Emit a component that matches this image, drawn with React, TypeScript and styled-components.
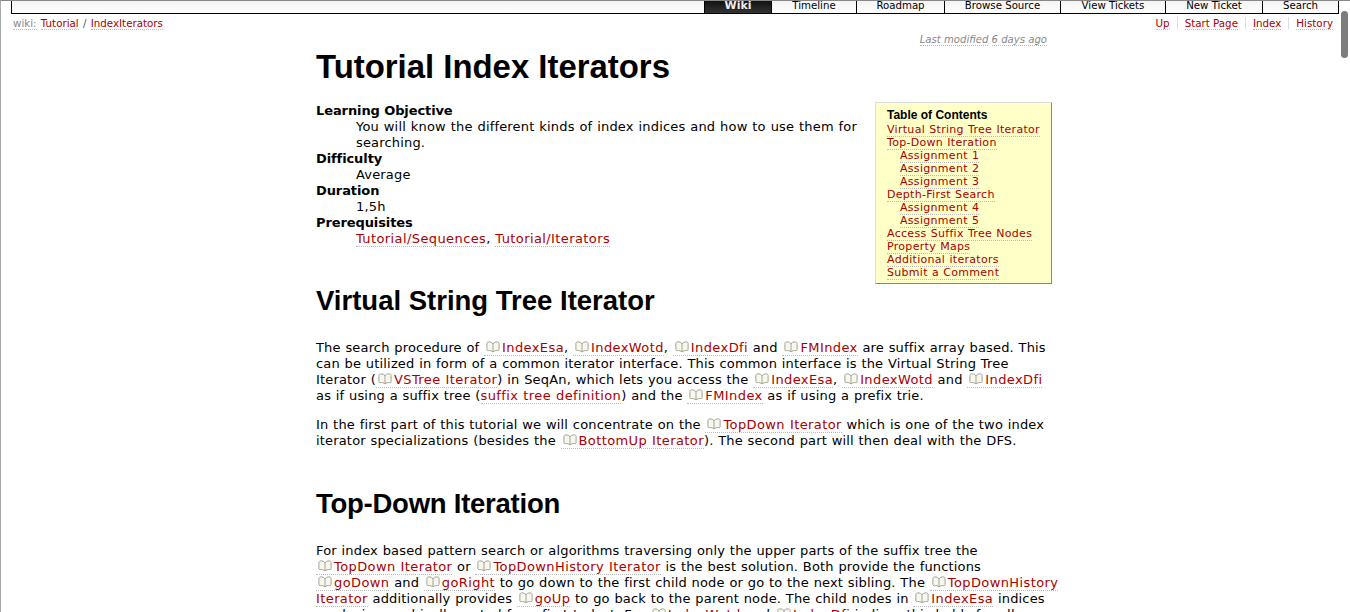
import * as React from "react";
import styled, { createGlobalStyle } from "styled-components";

const GlobalStyle = createGlobalStyle`
    html, body {
        margin: 0;
        height: 612px;
        overflow: hidden;
        background: #fff;
        font-family: "DejaVu Sans", Verdana, sans-serif;
        font-size: 13px;
        color: #000;
    }
`;

const tabs = [
    { label: "Wiki", width: 67, active: true },
    { label: "Timeline", width: 85 },
    { label: "Roadmap", width: 88 },
    { label: "Browse Source", width: 116 },
    { label: "View Tickets", width: 105 },
    { label: "New Ticket", width: 97 },
    { label: "Search", width: 76 },
];

const Book = () => (
    <BookIcon viewBox="0 0 14 12" aria-hidden="true">
        <path d="M7 3C6.4 1.4 4.6.8 2.6.9 1.6 1 1 1.4.9 2.4v6.2c0 .8.5 1.1 1.3 1C4 9.4 6 9.8 7 11c1-1.2 3-1.6 4.8-1.4.8.1 1.3-.2 1.3-1V2.4c-.1-1-.7-1.4-1.7-1.5C9.4.8 7.6 1.4 7 3z" />
        <path d="M7 3v8" />
    </BookIcon>
);

const Ext: React.FC<{ children: React.ReactNode }> = ({ children }) => (
    <Link $icon>
        <Book />
        {children}
    </Link>
);

export default function App() {
    return (
        <Page>
            <GlobalStyle />
            <MainNav>
                {tabs.map((t) => (
                    <Tab key={t.label} $width={t.width} $active={t.active}>
                        {t.label}
                    </Tab>
                ))}
            </MainNav>
            <ContextBar>
                <Path>
                    <Muted>wiki:</Muted> <PathLink>Tutorial</PathLink> / <PathLink>IndexIterators</PathLink>
                </Path>
                <ContextNav>
                    <ContextItem><PathLink>Up</PathLink></ContextItem>
                    <ContextItem><PathLink>Start Page</PathLink></ContextItem>
                    <ContextItem><PathLink>Index</PathLink></ContextItem>
                    <ContextItem $last><PathLink>History</PathLink></ContextItem>
                </ContextNav>
            </ContextBar>
            <Modified>
                <Muted>Last modified</Muted> <Muted>6 days ago</Muted>
            </Modified>
            <Content>
                <Title>Tutorial Index Iterators</Title>
                <Toc>
                    <TocTitle>Table of Contents</TocTitle>
                    <TocRow><Link>Virtual String Tree Iterator</Link></TocRow>
                    <TocRow><Link>Top-Down Iteration</Link></TocRow>
                    <TocRow $sub><Link>Assignment 1</Link></TocRow>
                    <TocRow $sub><Link>Assignment 2</Link></TocRow>
                    <TocRow $sub><Link>Assignment 3</Link></TocRow>
                    <TocRow><Link>Depth-First Search</Link></TocRow>
                    <TocRow $sub><Link>Assignment 4</Link></TocRow>
                    <TocRow $sub><Link>Assignment 5</Link></TocRow>
                    <TocRow><Link>Access Suffix Tree Nodes</Link></TocRow>
                    <TocRow><Link>Property Maps</Link></TocRow>
                    <TocRow><Link>Additional iterators</Link></TocRow>
                    <TocRow><Link>Submit a Comment</Link></TocRow>
                </Toc>
                <Facts>
                    <dt>Learning Objective</dt>
                    <dd>You will know the different kinds of index indices and how to use them for searching.</dd>
                    <dt>Difficulty</dt>
                    <dd>Average</dd>
                    <dt>Duration</dt>
                    <dd>1,5h</dd>
                    <dt>Prerequisites</dt>
                    <dd>
                        <Link>Tutorial/Sequences</Link>, <Link>Tutorial/Iterators</Link>
                    </dd>
                </Facts>
                <Heading>Virtual String Tree Iterator</Heading>
                <Para>
                    The search procedure of <Ext>IndexEsa</Ext>, <Ext>IndexWotd</Ext>, <Ext>IndexDfi</Ext> and <Ext>FMIndex</Ext> are suffix array based. This<br />
                    can be utilized in form of a common iterator interface. This common interface is the Virtual String Tree<br />
                    Iterator (<Ext>VSTree Iterator</Ext>) in SeqAn, which lets you access the <Ext>IndexEsa</Ext>, <Ext>IndexWotd</Ext> and <Ext>IndexDfi</Ext><br />
                    as if using a suffix tree (<Link>suffix tree definition</Link>) and the <Ext>FMIndex</Ext> as if using a prefix trie.
                </Para>
                <Para>
                    In the first part of this tutorial we will concentrate on the <Ext>TopDown Iterator</Ext> which is one of the two index<br />
                    iterator specializations (besides the <Ext>BottomUp Iterator</Ext>). The second part will then deal with the DFS.
                </Para>
                <Heading $gap>Top-Down Iteration</Heading>
                <Para>
                    For index based pattern search or algorithms traversing only the upper parts of the suffix tree the<br />
                    <Ext>TopDown Iterator</Ext> or <Ext>TopDownHistory Iterator</Ext> is the best solution. Both provide the functions<br />
                    <Ext>goDown</Ext> and <Ext>goRight</Ext> to go down to the first child node or go to the next sibling. The <Ext>TopDownHistory</Ext><br />
                    <Link>Iterator</Link> additionally provides <Ext>goUp</Ext> to go back to the parent node. The child nodes in <Ext>IndexEsa</Ext> indices<br />
                    are lexicographically sorted from first to last. For <Ext>IndexWotd</Ext> and <Ext>IndexDfi</Ext> indices this holds for all
                </Para>
            </Content>
            <ScrollThumb />
        </Page>
    );
}

const Page = styled.div`
    position: relative;
    height: 611px;
    overflow: hidden;
    border-top: 1px solid #888;
    border-left: 1px solid #aaa;
`;

const MainNav = styled.nav`
    display: flex;
    justify-content: flex-end;
    height: 12px;
    margin: 0 11px 0 10px;
    border: solid #000;
    border-width: 0 1px 1px;
    background: linear-gradient(#f4f4f4, #fff);
    overflow: hidden;
`;

const Tab = styled.div<{ $width: number; $active?: boolean }>`
    width: ${(p) => p.$width}px;
    box-sizing: border-box;
    height: 12px;
    line-height: 9px;
    text-align: center;
    font-size: ${(p) => (p.$active ? "11px" : "10.2px")};
    color: ${(p) => (p.$active ? "#eee" : "#000")};
    font-weight: ${(p) => (p.$active ? "bold" : "normal")};
    background: ${(p) => (p.$active ? "linear-gradient(#111, #333)" : "transparent")};
    border-left: 1px solid #000;
`;

const ContextBar = styled.div`
    display: flex;
    justify-content: space-between;
    align-items: center;
    height: 18px;
    margin: 0 17px 0 12px;
    font-size: 10.3px;
    color: #555;
`;

const Path = styled.div`
    word-spacing: 1px;
`;

const Muted = styled.span`
    color: #888;
    border-bottom: 1px dotted #bbb;
`;

const PathLink = styled.a`
    color: #a00;
    border-bottom: 1px dotted #bbb;
`;

const ContextNav = styled.div`
    display: flex;
`;

const ContextItem = styled.div<{ $last?: boolean }>`
    padding: 0 7px;
    border-right: ${(p) => (p.$last ? "none" : "1px solid #ddd")};
    &:last-child {
        padding-right: 0;
    }
`;

const Modified = styled.div`
    margin: 2px 303px 0 0;
    text-align: right;
    font-size: 10.1px;
    font-style: italic;
    line-height: 12px;
`;

const Content = styled.main`
    width: 736px;
    margin: 0 0 0 315px;
`;

const Title = styled.h1`
    margin: -1px 0 0;
    height: 58px;
    font: bold 32.9px/44px "Liberation Sans", Arial, sans-serif;
`;

const Heading = styled.h2<{ $gap?: boolean }>`
    margin: ${(p) => (p.$gap ? "37px" : "36px")} 0 21px;
    font: bold 27.5px/36px "Liberation Sans", Arial, sans-serif;
    letter-spacing: ${(p) => (p.$gap ? "-0.25px" : "0")};
`;

const Toc = styled.aside`
    float: right;
    box-sizing: border-box;
    width: 177px;
    height: 182px;
    margin: -1px 0 0 18px;
    padding: 5px 11px;
    background: #ffffc8;
    border: 1px solid #ddd;
    border-right-color: #888;
    border-bottom-color: #888;
    font-size: 11px;
    line-height: 13px;
    letter-spacing: 0.3px;
    word-spacing: 0.4px;
`;

const TocTitle = styled.div`
    font: bold 12px/15px "Liberation Sans", Arial, sans-serif;
    letter-spacing: 0;
    word-spacing: 0;
`;

const TocRow = styled.div<{ $sub?: boolean }>`
    padding-left: ${(p) => (p.$sub ? "13px" : "0")};
`;

const Link = styled.a<{ $icon?: boolean }>`
    color: #a00;
    border-bottom: 1px dotted #bbb;
    padding-left: ${(p) => (p.$icon ? "2px" : "0")};
`;

const BookIcon = styled.svg`
    width: 14px;
    height: 12px;
    margin-right: 2px;
    vertical-align: -1px;
    fill: #f7f7ee;
    stroke: #a3a394;
    stroke-width: 1;
`;

const Facts = styled.dl`
    margin: 0;
    line-height: 16px;
    dt {
        font-weight: bold;
        letter-spacing: -0.1px;
    }
    dd {
        margin: 0 0 0 40px;
        letter-spacing: 0.17px;
        word-spacing: 0.4px;
        text-align: justify;
    }
    ${Link} {
        letter-spacing: 0.4px;
    }
`;

const Para = styled.p`
    margin: 0 0 13px;
    line-height: 16px;
    white-space: nowrap;
    letter-spacing: 0.17px;
    word-spacing: 0.4px;
    ${Link} {
        letter-spacing: 0.4px;
    }
`;

const ScrollThumb = styled.div`
    position: absolute;
    top: 10px;
    right: 2px;
    width: 7px;
    height: 47px;
    border-radius: 4px;
    background: #7d7d7d;
`;
